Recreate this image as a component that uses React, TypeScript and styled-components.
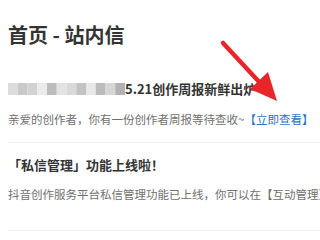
import React from "react";
import styled, { createGlobalStyle } from "styled-components";

const Global = createGlobalStyle`
  html, body { margin: 0; padding: 0; background: #ffffff; }
  body { font-family: "Noto Sans CJK SC", "Noto Sans", sans-serif; }
`;

const Page = styled.div`
  position: relative;
  width: 320px;
  height: 240px;
  overflow: hidden;
  background: #ffffff;
  white-space: nowrap;
`;

const Header = styled.h1`
  margin: 21px 0 30px 8px;
  font-size: 20px;
  line-height: 28px;
  font-weight: 700;
  color: #333333;
`;

const Item = styled.div<{ $top: number; $bottom: number }>`
  margin-left: 8px;
  padding: ${(p) => p.$top}px 0 ${(p) => p.$bottom}px 0;
  border-bottom: 1px solid #f0f0f0;
`;

const ItemTitle = styled.div`
  display: flex;
  align-items: center;
  height: 20px;
  font-size: 13px;
  line-height: 20px;
  font-weight: 700;
  color: #333333;
`;

const Desc = styled.div<{ $gap: number }>`
  margin-top: ${(p) => p.$gap}px;
  font-size: 11.5px;
  line-height: 18px;
  color: #707070;
`;

const Link = styled.span`
  color: #2f6fc6;
`;

const Mosaic = styled.svg`
  display: block;
  flex: none;
`;

const ArrowLayer = styled.svg`
  position: absolute;
  left: 0;
  top: 0;
  pointer-events: none;
`;

const blocks = [
  "#dcdcdc", "#c9c9c9", "#d2d2d2", "#ebebeb", "#bdbdbd", "#e3e3e3",
  "#d9d9d9", "#c3c3c3", "#e8e8e8", "#bcbcbc", "#d6d6d6", "#b2b2b2",
];

export default function App() {
  return (
    <Page>
      <Global />
      <Header>首页 - 站内信</Header>
      <Item $top={0} $bottom={14}>
        <ItemTitle>
          <Mosaic width="117" height="12" viewBox="0 0 117 12">
            {blocks.map((c, i) => (
              <rect key={i} x={i * 9.75} y={0} width={9.75} height={12} fill={c} />
            ))}
          </Mosaic>
          <span>5.21创作周报新鲜出炉</span>
        </ItemTitle>
        <Desc $gap={11}>
          亲爱的创作者，你有一份创作者周报等待查收~<Link>【立即查看】</Link>
        </Desc>
      </Item>
      <Item $top={12} $bottom={27}>
        <ItemTitle>「私信管理」功能上线啦！</ItemTitle>
        <Desc $gap={10}>抖音创作服务平台私信管理功能已上线，你可以在【互动管理】中查看</Desc>
      </Item>
      <ArrowLayer width="320" height="240" viewBox="0 0 320 240">
        <line x1="223" y1="43" x2="262" y2="85" stroke="#e8262a" strokeWidth="4.5" strokeLinecap="round" />
        <polygon points="250,89 268,72 277,101" fill="#e8262a" />
      </ArrowLayer>
    </Page>
  );
}
